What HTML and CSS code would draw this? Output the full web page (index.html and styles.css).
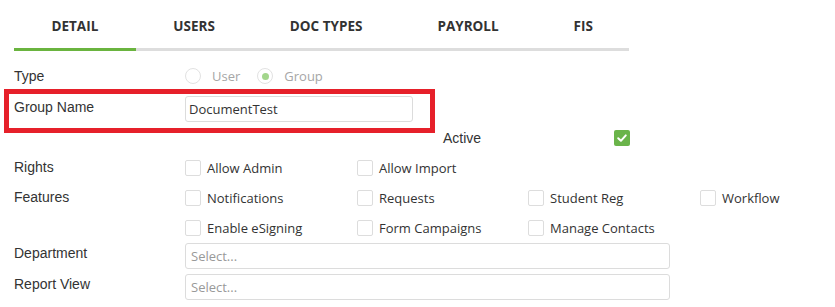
FILE: index.html
```html
<!DOCTYPE html>
<html>
<head>
<meta charset="utf-8">
<link rel="stylesheet" href="styles.css">
</head>
<body>
<div class="page">
  <nav class="tabs">
    <div class="tab active">DETAIL</div>
    <div class="tab">USERS</div>
    <div class="tab">DOC TYPES</div>
    <div class="tab">PAYROLL</div>
    <div class="tab">FIS</div>
  </nav>

  <div class="row row-type">
    <div class="label">Type</div>
    <div class="radios">
      <span class="radio"></span><span class="radio-text">User</span>
      <span class="radio checked"></span><span class="radio-text">Group</span>
    </div>
  </div>

  <div class="row row-name">
    <div class="label label-name">Group Name</div>
    <div class="input text-input">DocumentTest</div>
    <div class="highlight"></div>
  </div>

  <div class="row row-active">
    <div class="label">Active</div>
    <span class="check on"><svg width="16" height="16" viewBox="0 0 16 16"><path d="M4.2 8.3 L6.9 10.8 L11.8 5.4" fill="none" stroke="#fff" stroke-width="2" stroke-linecap="round" stroke-linejoin="round"/></svg></span>
  </div>

  <div class="row row-checks">
    <div class="label">Rights</div>
    <div class="checks">
      <div class="ck"><span class="check"></span>Allow Admin</div>
      <div class="ck"><span class="check"></span>Allow Import</div>
    </div>
  </div>

  <div class="row row-checks">
    <div class="label">Features</div>
    <div class="checks">
      <div class="ck"><span class="check"></span>Notifications</div>
      <div class="ck"><span class="check"></span>Requests</div>
      <div class="ck"><span class="check"></span>Student Reg</div>
      <div class="ck"><span class="check"></span>Workflow</div>
    </div>
  </div>

  <div class="row row-checks">
    <div class="label"></div>
    <div class="checks">
      <div class="ck"><span class="check"></span>Enable eSigning</div>
      <div class="ck"><span class="check"></span>Form Campaigns</div>
      <div class="ck"><span class="check"></span>Manage Contacts</div>
    </div>
  </div>

  <div class="row row-select first">
    <div class="label">Department</div>
    <div class="input select">Select...</div>
  </div>

  <div class="row row-select">
    <div class="label">Report View</div>
    <div class="input select">Select...</div>
  </div>
</div>
</body>
</html>
```

FILE: styles.css
```css
html, body {
  margin: 0;
  padding: 0;
  background: #ffffff;
}

.page {
  position: relative;
  padding-left: 14px;
  color: #333333;
}

.tabs {
  display: flex;
  width: 615px;
  border-bottom: 3px solid #dddddd;
}

.tab {
  padding: 16px 37.5px 12px;
  margin-bottom: -3px;
  border-bottom: 3px solid transparent;
  font-family: "Open Sans", sans-serif;
  font-weight: 700;
  font-size: 13.5px;
  line-height: 20px;
  color: #333333;
  white-space: nowrap;
}

.tab.active {
  border-bottom-color: #6ab43f;
}

.row {
  display: flex;
  align-items: flex-start;
}

.label {
  width: 171px;
  flex: none;
  font-family: "Liberation Sans", Arial, sans-serif;
  font-size: 14px;
  line-height: 20px;
  color: #333333;
}

.row-type {
  margin-top: 15px;
  height: 20px;
  align-items: center;
}

.radios {
  display: flex;
  align-items: center;
  font-family: "Open Sans", sans-serif;
  font-size: 13px;
  color: #a6a6a6;
}

.radio {
  width: 14px;
  height: 14px;
  border: 1px solid #e2e2e2;
  border-radius: 50%;
  display: flex;
  align-items: center;
  justify-content: center;
  flex: none;
}

.radio.checked::after {
  content: "";
  width: 7px;
  height: 7px;
  border-radius: 50%;
  background: #a3d68c;
}

.radio-text {
  margin-left: 11px;
  margin-right: 17px;
}

.row-name {
  margin-top: 10px;
  position: relative;
}

.label-name {
  padding-top: 1px;
}

.input {
  box-sizing: border-box;
  height: 26px;
  border: 1px solid #dcdcdc;
  border-radius: 3px;
  font-family: "Open Sans", sans-serif;
  font-size: 13px;
  line-height: 24px;
  padding-left: 3px;
}

.text-input {
  width: 228px;
  color: #333333;
}

.highlight {
  position: absolute;
  left: -10px;
  top: -7px;
  width: 431px;
  height: 44px;
  box-sizing: border-box;
  border: 5px solid #e6202a;
}

.row-active {
  margin-top: 8px;
  padding-left: 429px;
  align-items: center;
  height: 16px;
}

.row-active .label {
  line-height: 16px;
}

.check {
  box-sizing: border-box;
  width: 16px;
  height: 16px;
  border: 1px solid #dddddd;
  border-radius: 2px;
  flex: none;
  display: inline-block;
}

.check.on {
  border: none;
  background: #6ab44a;
  display: block;
}

.check.on svg {
  display: block;
}

.row-checks {
  margin-top: 14px;
  height: 16px;
  align-items: center;
}

.row-checks .label {
  line-height: 16px;
  margin-top: -2px;
}

.checks {
  display: grid;
  grid-template-columns: 172px 171px 172px 171px;
}

.ck {
  display: flex;
  align-items: center;
  gap: 6px;
  font-family: "Open Sans", sans-serif;
  font-size: 13px;
  line-height: 16px;
  color: #333333;
  white-space: nowrap;
}

.row-select {
  margin-top: 5px;
}

.row-select.first {
  margin-top: 7px;
}

.select {
  width: 485px;
  color: #999999;
  padding-left: 5px;
}
```
